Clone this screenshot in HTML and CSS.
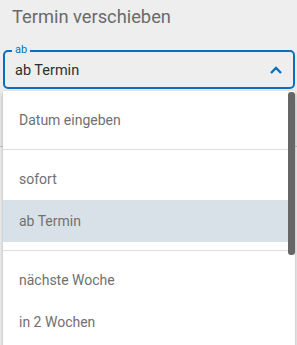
FILE: index.html
```html
<!DOCTYPE html>
<html lang="de">
<head>
  <meta charset="UTF-8" />
  <meta name="viewport" content="width=device-width, initial-scale=1" />
  <title>Termin verschieben</title>
  <link rel="stylesheet" href="styles.css">
</head>
<body>

  <div class="header">
    <h2 class="title">Termin verschieben</h2>

    <div class="field">
      <span class="field-label">ab</span>
      <span class="field-value">ab Termin</span>
      <svg class="chevron" width="14" height="10" viewBox="0 0 14 10">
        <path d="M2 8 L7 3 L12 8" fill="none" stroke="#0b6fbb" stroke-width="2.4" />
      </svg>
    </div>
  </div>

  <div class="menu">
    <div class="item">Datum eingeben</div>
    <div class="divider"></div>
    <div class="item">sofort</div>
    <div class="item selected">ab Termin</div>
    <div class="divider"></div>
    <div class="item">nächste Woche</div>
    <div class="item">in 2 Wochen</div>
    <div class="scrollbar"></div>
  </div>

</body>
</html>
```

FILE: styles.css
```css
body { margin: 0; background: #f4f4f4; font-family: Roboto, "Liberation Sans", sans-serif; }
.header { background: #eeeeee; height: 147px; box-sizing: border-box; padding: 6px 2px 0 3px; border-bottom: 1px solid #c8c8c8; }
.title { margin: 0 0 0 9px; font-size: 18.3px; font-weight: 400; line-height: 22px; color: #6a6a6a; }
.field { position: relative; margin-top: 22px; height: 39px; box-sizing: border-box; border: 2px solid #0b6fbb; border-radius: 5px; display: flex; align-items: center; padding: 0 10px 0 10px; }
.field-label { position: absolute; top: -9px; left: 7px; padding: 0 3px; background: #eeeeee; font-size: 11px; line-height: 14px; color: #0b6fbb; }
.field-value { flex: 1; font-size: 14.5px; color: #2e2e2e; padding-top: 2px; }
.chevron { display: block; }
.menu { position: absolute; top: 91px; left: 3px; width: 292px; height: 270px; background: #fff; box-shadow: 0 2px 5px rgba(0,0,0,0.3); padding-top: 8px; box-sizing: border-box; overflow: hidden; }
.item { height: 42px; line-height: 42px; padding-left: 16px; font-size: 14px; color: #707070; }
.item.selected { background: #d9e1e8; }
.divider { height: 1px; background: #dddddd; margin: 8px 0; }
.scrollbar { position: absolute; top: 1px; right: 0; width: 7px; height: 163px; background: #666; border-radius: 3px; }
```
